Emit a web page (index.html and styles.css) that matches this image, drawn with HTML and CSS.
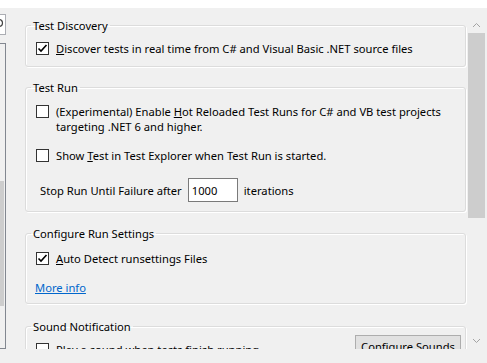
FILE: index.html
```html
<!DOCTYPE html>
<html>
<head>
    <title>Test Options</title>
    <link rel="stylesheet" href="styles.css">
</head>
<body>
    <div class="topbar"></div>
    <div class="frame">
        <div class="side">
            <div class="search">
                <svg width="5" height="19" viewBox="0 0 5 19"><circle cx="-1" cy="8" r="3.5" fill="none" stroke="#444" stroke-width="1.2"/></svg>
            </div>
            <div class="tree"><div class="tree-thumb"></div></div>
        </div>

        <div class="main">
            <fieldset class="group g-discovery">
                <legend>Test Discovery</legend>
                <label class="check">
                    <span class="box"><svg width="11" height="11" viewBox="0 0 11 11"><polyline points="1.5,5.5 4,8 9.5,2" fill="none" stroke="#000" stroke-width="1.6"/></svg></span>
                    <span><u>D</u>iscover tests in real time from C# and Visual Basic .NET source files</span>
                </label>
            </fieldset>

            <fieldset class="group g-run">
                <legend>Test Run</legend>
                <label class="check">
                    <span class="box"></span>
                    <span>(Experimental) Enable <u>H</u>ot Reloaded Test Runs for C# and VB test projects<br>targeting .NET 6 and higher.</span>
                </label>
                <label class="check second">
                    <span class="box"></span>
                    <span>Show <u>T</u>est in Test Explorer when Test Run is started.</span>
                </label>
                <div class="stop-row">
                    <span>Stop Run Until Failure after</span>
                    <input class="num" type="text" value="1000">
                    <span>iterations</span>
                </div>
            </fieldset>

            <fieldset class="group g-settings">
                <legend>Configure Run Settings</legend>
                <label class="check">
                    <span class="box"><svg width="11" height="11" viewBox="0 0 11 11"><polyline points="1.5,5.5 4,8 9.5,2" fill="none" stroke="#000" stroke-width="1.6"/></svg></span>
                    <span><u>A</u>uto Detect runsettings Files</span>
                </label>
                <a class="more" href="#">More info</a>
            </fieldset>

            <fieldset class="group g-sound">
                <legend>Sound Notification</legend>
                <div class="sound-row">
                    <label class="check">
                        <span class="box"></span>
                        <span>Play a sound when tests finish running</span>
                    </label>
                    <button class="btn">Configure Sounds</button>
                </div>
            </fieldset>
        </div>

        <div class="vscroll">
            <div class="arrow"><svg width="9" height="6" viewBox="0 0 9 6"><polyline points="1,5 4.5,1.5 8,5" fill="none" stroke="#a3a3a3" stroke-width="1"/></svg></div>
            <div class="track"><div class="thumb"></div></div>
            <div class="arrow"><svg width="9" height="6" viewBox="0 0 9 6"><polyline points="1,1 4.5,4.5 8,1" fill="none" stroke="#a3a3a3" stroke-width="1"/></svg></div>
        </div>
    </div>
</body>
</html>
```

FILE: styles.css
```css
body {
    margin: 0;
    background-color: #f0f0f0;
    font-family: "Noto Sans", sans-serif;
    font-size: 11.2px;
    color: #000;
    width: 487px;
    height: 363px;
    overflow: hidden;
}

.topbar {
    height: 8px;
    background-color: #fff;
}

.frame {
    display: flex;
    height: 341px;
    padding-right: 2px;
}

/* left tree pane, mostly scrolled off */
.side {
    width: 6px;
    display: flex;
    flex-direction: column;
}

.search {
    margin-top: 6px;
    height: 19px;
    border: 1px solid #abadb3;
    border-left: none;
    background-color: #fff;
}

.search svg {
    display: block;
}

.tree {
    flex: 1;
    margin-top: 8px;
    border: 1px solid #828790;
    border-left: none;
    background-color: #f0f0f0;
}

.tree-thumb {
    margin-top: 137px;
    width: 4px;
    height: 125px;
    background-color: #cdcdcd;
}

.main {
    flex: 1;
    margin-top: 8px;
    padding: 0 2px 0 19px;
    overflow: hidden;
}

.group {
    margin: 0;
    padding: 0 10px;
    border: 1px solid #dcdcdc;
    border-radius: 3px;
    box-shadow: inset 1px 1px 0 #fff, 1px 1px 0 #fff;
}

.group legend {
    margin-left: -5px;
    padding: 0 2px;
    line-height: 17px;
}

.g-discovery {
    margin-top: 1px;
    padding-top: 7px;
    padding-bottom: 10px;
}

.g-run {
    margin-top: 12px;
    padding-top: 8px;
    padding-bottom: 9px;
}

.g-settings {
    margin-top: 13px;
    padding-top: 9px;
    padding-bottom: 8px;
}

.g-sound {
    margin-top: 14px;
    padding: 0 4px 0 10px;
}

.check {
    display: flex;
    align-items: flex-start;
    gap: 7px;
    line-height: 15px;
    white-space: nowrap;
}

.check.second {
    margin-top: 14px;
}

.box {
    flex: none;
    width: 11px;
    height: 11px;
    margin-top: 1px;
    border: 1px solid #333;
    background-color: #fff;
}

.box svg {
    display: block;
}

.stop-row {
    display: flex;
    align-items: center;
    margin-top: 15px;
    padding-left: 4px;
}

.num {
    box-sizing: border-box;
    width: 50px;
    height: 24px;
    margin: 0 6px;
    padding: 0 3px;
    border: 1px solid #7a7a7a;
    font-family: inherit;
    font-size: 11.2px;
    color: #000;
}

.more {
    display: inline-block;
    margin-top: 14px;
    margin-left: -1px;
    line-height: 15px;
    color: #0066cc;
}

.sound-row {
    display: flex;
    justify-content: space-between;
    align-items: flex-start;
}

.sound-row .check {
    margin-top: 7px;
}

.btn {
    width: 106px;
    height: 23px;
    padding: 0;
    background-color: #e1e1e1;
    border: 1px solid #adadad;
    font-family: inherit;
    font-size: 11.2px;
    color: #000;
}

.vscroll {
    width: 17px;
    margin-top: 8px;
    display: flex;
    flex-direction: column;
}

.arrow {
    height: 17px;
    display: flex;
    align-items: center;
    justify-content: center;
}

.arrow svg {
    display: block;
}

.track {
    flex: 1;
}

.thumb {
    height: 185px;
    background-color: #cdcdcd;
}
```
